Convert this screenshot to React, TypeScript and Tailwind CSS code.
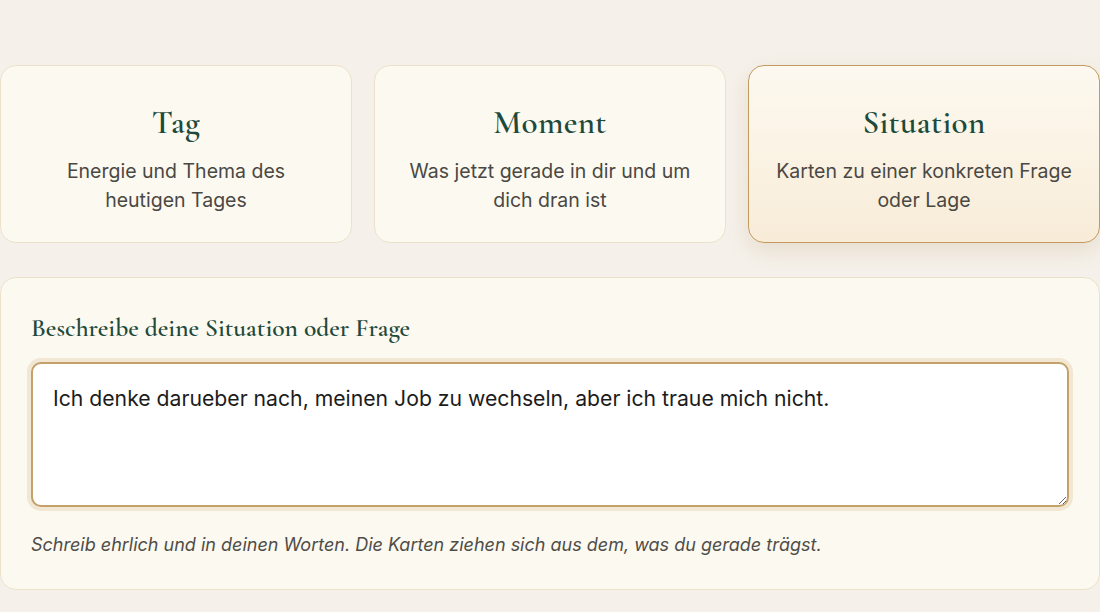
import { useState } from "react"

interface Mode {
  id: string
  title: string
  description: string
}

const modes: Mode[] = [
  { id: "tag", title: "Tag", description: "Energie und Thema des heutigen Tages" },
  { id: "moment", title: "Moment", description: "Was jetzt gerade in dir und um dich dran ist" },
  { id: "situation", title: "Situation", description: "Karten zu einer konkreten Frage oder Lage" },
]

const serif = "font-['Cormorant_Garamond','Liberation_Serif',serif]"

export default function App() {
  const [active, setActive] = useState("situation")
  const [text, setText] = useState(
    "Ich denke darueber nach, meinen Job zu wechseln, aber ich traue mich nicht."
  )

  return (
    <div className="min-h-[612px] w-full overflow-hidden bg-[#f5f1ea] font-['Inter','Liberation_Sans',sans-serif]">
      <div className="w-[1100px] pt-[65px]">
        <div className="grid grid-cols-3 gap-[22px]">
          {modes.map((mode) => {
            const selected = mode.id === active
            return (
              <button
                key={mode.id}
                onClick={() => setActive(mode.id)}
                className={
                  selected
                    ? "flex h-[178px] flex-col items-center rounded-[16px] border border-[#c29a5f] bg-gradient-to-b from-[#fdf9f0] to-[#f8ecd8] px-6 pt-[37px] text-center shadow-[0_8px_22px_rgba(160,120,60,0.16)]"
                    : "flex h-[178px] flex-col items-center rounded-[16px] border border-[#ece2cc] bg-[#fcf9f1] px-6 pt-[37px] text-center"
                }
              >
                <span className={`${serif} text-[33px] font-semibold leading-[40px] tracking-[0.01em] text-[#1d4a3c]`}>
                  {mode.title}
                </span>
                <span className="mt-[14px] max-w-[300px] text-[19.5px] leading-[29px] text-[#4a4843]">
                  {mode.description}
                </span>
              </button>
            )
          })}
        </div>

        <div className="mt-[34px] rounded-[16px] border border-[#ece2cc] bg-[#fcf9f1] px-[30px] pt-[34px] pb-[32px]">
          <label className={`block ${serif} text-[25.5px] font-semibold leading-[32px] text-[#1d4a3c]`}>
            Beschreibe deine Situation oder Frage
          </label>
          <textarea
            value={text}
            onChange={(e) => setText(e.target.value)}
            className="mt-[18px] block h-[145px] w-full resize-y rounded-[10px] border-2 border-[#c4a06a] bg-white px-[20px] pt-[20px] text-[21.2px] leading-[28px] text-[#1c1c1c] outline-none ring-4 ring-[#f1e7d3]"
          />
          <p className="mt-[26px] text-[18px] italic leading-[24px] text-[#4f4d48]">
            Schreib ehrlich und in deinen Worten. Die Karten ziehen sich aus dem, was du gerade trägst.
          </p>
        </div>
      </div>
    </div>
  )
}
